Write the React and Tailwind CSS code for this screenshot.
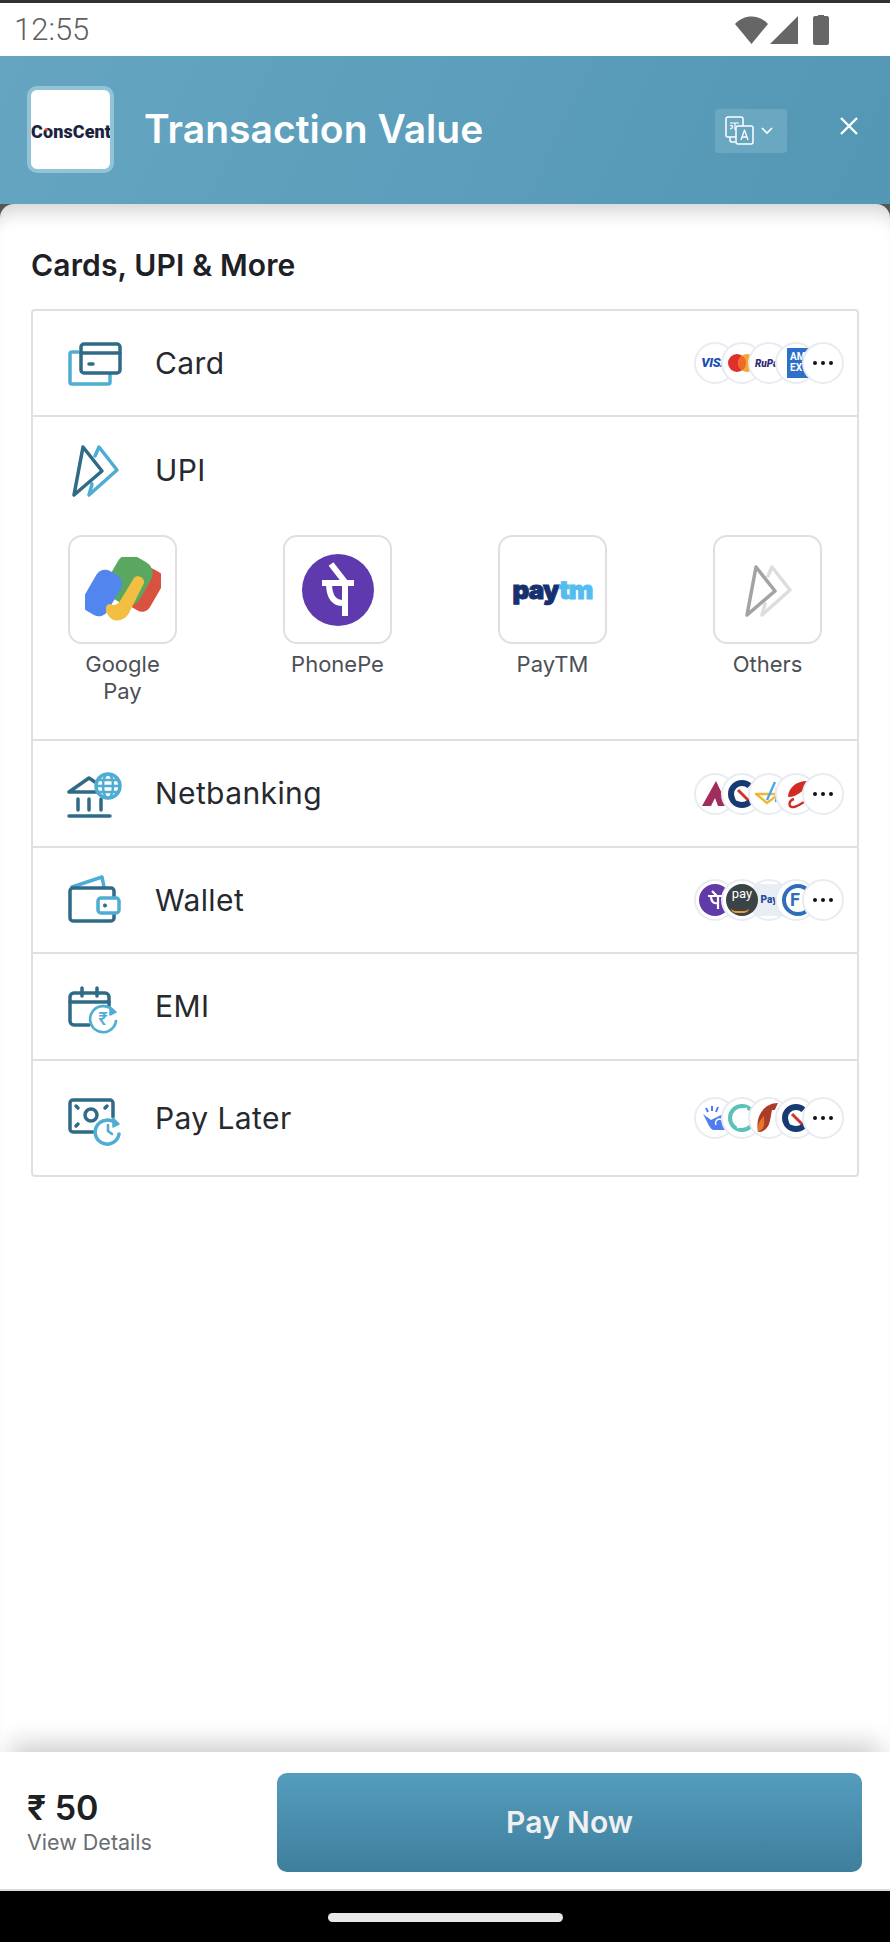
import React from 'react'

const DARK = '#2f6b87'
const LIGHT = '#4fadd4'

const StatusBar = () => (
  <div className="h-[56px] shrink-0 bg-white border-t-[3px] border-[#333333] flex items-center pl-[14px] pr-[59px]">
    <span className="flex-1 text-[31px] font-light text-[#5f5f5f] mt-[2px] font-['Roboto',sans-serif]">12:55</span>
    <svg width="97" height="32" viewBox="0 0 97 32" fill="#666666">
      <path d="M1 10 C10 0 25 0 34 10 L17.5 30 Z" />
      <path d="M64 2 V30 H36 Z" />
      <path d="M79 4 a2 2 0 0 1 2-2 h3 v-1 h6 v1 h3 a2 2 0 0 1 2 2 v25 a2 2 0 0 1-2 2 h-12 a2 2 0 0 1-2-2 Z" />
    </svg>
  </div>
)

const TranslateIcon = () => (
  <svg width="30" height="30" viewBox="0 0 30 30" fill="none" stroke="white" strokeWidth="1.5" strokeLinejoin="round">
    <rect x="1" y="1" width="17" height="20" rx="2" />
    <path d="M5 7 H14 M10 7 V14 M5 10 C8 8 9 12 5 13" strokeWidth="1.2" />
    <path d="M5 21 v3 a2 2 0 0 0 2 2 h3" />
    <rect x="11" y="10" width="17" height="18" rx="2" fill="#66a4bf" />
    <path d="M16 24 L19.5 14 L23 24 M17.2 21 H21.8" strokeWidth="1.3" />
  </svg>
)

const Header = () => (
  <div className="h-[148px] shrink-0 bg-linear-[115deg] from-[#65a5c1] to-[#5397b5] flex items-center pl-[27px] pr-[31px]">
    <div className="w-[87px] h-[87px] rounded-[10px] border-[4px] border-[#93c3d7] bg-white flex items-center overflow-hidden -mt-[1px]">
      <span className="relative mt-[3px] text-[18px] font-black tracking-[0.1px] whitespace-nowrap text-[#1c2340] font-['Roboto',sans-serif]">
        ConsCent
        <span className="absolute left-[14px] top-[10px] w-[3px] h-[3px] rounded-full bg-[#e5533d]"></span>
      </span>
    </div>
    <span className="ml-[30px] flex-1 text-[39px] tracking-[0.05px] font-semibold text-white font-['Inter',sans-serif] -mt-[2px]">Transaction Value</span>
    <div className="w-[72px] h-[44px] rounded-[4px] bg-[#6aa8c2] flex items-center pl-[10px] gap-[5px] mt-[1px]">
      <TranslateIcon />
      <svg width="14" height="10" viewBox="0 0 14 10" fill="none" stroke="white" strokeWidth="1.6"><path d="M2 2 L7 7 L12 2" /></svg>
    </div>
    <svg className="ml-[52px] -mt-[8px]" width="20" height="20" viewBox="0 0 20 20" stroke="white" strokeWidth="2.4"><path d="M2 2 L18 18 M18 2 L2 18" /></svg>
  </div>
)

const CardIcon = () => (
  <svg width="56" height="56" viewBox="0 0 56 56" fill="none" strokeWidth="3.5" strokeLinecap="round" strokeLinejoin="round">
    <path d="M11 17 H5 a2 2 0 0 0-2 2 V47 a2 2 0 0 0 2 2 H41 a2 2 0 0 0 2-2 V39" stroke={LIGHT} />
    <rect x="14" y="9" width="39" height="29" rx="3" stroke={DARK} />
    <path d="M14 18 H53" stroke={DARK} />
    <path d="M22 29 H26" stroke={DARK} />
  </svg>
)

const UpiIcon = ({ dark = DARK, light = LIGHT }) => (
  <svg width="56" height="56" viewBox="0 0 56 56" fill="none" strokeWidth="3.5" strokeLinecap="round" strokeLinejoin="round">
    <path d="M28 14 L32 5 L50 28 L22 53 L25 42" stroke={light} />
    <path d="M16 5 L35 29 L7 53 Z" stroke={dark} />
  </svg>
)

const BankIcon = () => (
  <svg width="56" height="56" viewBox="0 0 56 56" fill="none" strokeWidth="3.5" strokeLinecap="round" strokeLinejoin="round">
    <path d="M2 26 L22 12 L28 16 M2 26 H30" stroke={DARK} />
    <path d="M11 33 V44 M22 33 V44 M34 33 V44 M2 50 H43" stroke={DARK} />
    <circle cx="41" cy="20" r="12" fill="white" stroke={LIGHT} />
    <ellipse cx="41" cy="20" rx="5" ry="12" stroke={LIGHT} strokeWidth="2.5" />
    <path d="M29 20 H53 M31 14 H51 M31 26 H51" stroke={LIGHT} strokeWidth="2.5" />
  </svg>
)

const WalletIcon = () => (
  <svg width="56" height="56" viewBox="0 0 56 56" fill="none" strokeWidth="3.5" strokeLinecap="round" strokeLinejoin="round">
    <path d="M5 15 L35 5 L37 15" stroke={LIGHT} />
    <path d="M47 24 V19 a3 3 0 0 0-3-3 H6 a3 3 0 0 0-3 3 V46 a3 3 0 0 0 3 3 H44 a3 3 0 0 0 3-3 V42" stroke={DARK} />
    <rect x="31" y="26" width="21" height="15" rx="3" fill="white" stroke={LIGHT} />
    <circle cx="38" cy="33.5" r="1.6" fill={DARK} stroke={DARK} strokeWidth="1" />
  </svg>
)

const EmiIcon = () => (
  <svg width="56" height="56" viewBox="0 0 56 56" fill="none" strokeWidth="3.5" strokeLinecap="round" strokeLinejoin="round">
    <path d="M22 46 H7 a4 4 0 0 1-4-4 V18 a4 4 0 0 1 4-4 H38 a4 4 0 0 1 4 4 V27" stroke={DARK} />
    <path d="M3 23 H42 M15 9 V17 M30 9 V17" stroke={DARK} />
    <path d="M47 33 A13 13 0 1 0 49 42" fill="white" stroke={LIGHT} strokeWidth="2.6" />
    <path d="M43 28 L49 33 L43 36 Z" fill={LIGHT} stroke={LIGHT} strokeWidth="1.5" />
    <text x="36" y="46" textAnchor="middle" fontSize="17" fontWeight="600" fill={LIGHT} stroke="none" fontFamily="Inter, sans-serif">₹</text>
  </svg>
)

const PayLaterIcon = () => (
  <svg width="56" height="56" viewBox="0 0 56 56" fill="none" strokeWidth="3.5" strokeLinecap="round" strokeLinejoin="round">
    <path d="M26 42 H6 a3 3 0 0 1-3-3 V13 a3 3 0 0 1 3-3 H43 a3 3 0 0 1 3 3 V27" stroke={DARK} />
    <circle cx="24" cy="25" r="6" stroke={DARK} />
    <path d="M9 16 L11 18 M40 16 L38 18 M9 36 L11 34" stroke={DARK} />
    <path d="M49 34 A12 12 0 1 0 52 44" fill="white" stroke={LIGHT} />
    <path d="M46 28 L52 34 L46 37 Z" fill={LIGHT} stroke={LIGHT} strokeWidth="1.5" />
    <path d="M41 35 V41 L45 44" stroke={LIGHT} strokeWidth="2.6" />
  </svg>
)

const Visa = () => <span className="text-[13px] font-black italic tracking-[-0.3px] text-[#1a4fb5] font-['Roboto',sans-serif]">VISA</span>
const Master = () => (
  <svg width="30" height="20" viewBox="0 0 30 20">
    <circle cx="10" cy="10" r="9" fill="#e0302b" />
    <circle cx="20" cy="10" r="9" fill="#f3a536" />
    <path d="M15 2.5 a9 9 0 0 1 0 15 a9 9 0 0 1 0-15" fill="#f2682a" />
  </svg>
)
const RuPay = () => <span className="text-[10px] font-black italic text-[#2f2c7a] font-['Roboto',sans-serif]">RuPay</span>
const Amex = () => (
  <span className="w-[26px] h-[30px] ml-[8px] shrink-0 bg-[#2e6fc9] text-white text-[10px] font-bold leading-[11px] pl-[3px] pt-[3px] font-['Roboto',sans-serif]">AM<br />EX</span>
)
const Axis = () => (
  <svg width="28" height="28" viewBox="0 0 28 28"><path d="M1 26 L15 1 L27 26 H17 L14 18 L10 26 Z" fill="#a02d5c" /></svg>
)
const Navy = () => (
  <svg width="28" height="28" viewBox="0 0 28 28">
    <circle cx="14" cy="14" r="11" fill="none" stroke="#173a73" strokeWidth="6" />
    <path d="M8 20 L24 6" stroke="#fff" strokeWidth="3" />
    <path d="M10 10 L20 20" stroke="#d2352c" strokeWidth="3" />
  </svg>
)
const Arrow = () => (
  <svg width="28" height="28" viewBox="0 0 28 28" fill="none" strokeWidth="2.4">
    <path d="M1 14 L24 14 L12 23 Z" stroke="#f2b637" />
    <path d="M12 20 L20 2 M22 8 L21 22" stroke="#4ba7e6" />
  </svg>
)
const Swoosh = () => (
  <svg width="28" height="30" viewBox="0 0 28 30" fill="none">
    <path d="M6 18 C6 8 16 1 27 2 C24 10 16 18 6 18 Z" fill="#d32b24" />
    <path d="M12 20 C6 22 6 29 12 28 C16 27 19 25 22 23" stroke="#d32b24" strokeWidth="2.4" />
  </svg>
)
const PhoneSmall = () => (
  <span className="w-[32px] h-[32px] rounded-full shrink-0 bg-[#5f3aa8] text-white flex items-center justify-center">
    <svg width="18" height="20" viewBox="0 0 18 20" fill="none" stroke="white" strokeWidth="2.2"><path d="M2 6 H16 M12 6 V19 M6 1 L11 6 M5 6 C5 12 8 14 12 13" /></svg>
  </span>
)
const AmazonPay = () => (
  <span className="w-[32px] h-[32px] rounded-full shrink-0 bg-[#3a4346] text-white text-[13px] leading-[20px] text-center relative font-['Roboto',sans-serif]">
    pay
    <span className="absolute left-[5px] bottom-[3px] w-[18px] h-[5px] border-b-2 border-[#f29d25] rounded-b-full"></span>
  </span>
)
const PayBlue = () => (
  <span className="w-[32px] h-[32px] shrink-0 bg-[#e9eef4] text-[#1f4d9c] text-[10px] font-black leading-[32px] text-center font-['Roboto',sans-serif]">Pay</span>
)
const BlueF = () => (
  <span className="w-[32px] h-[32px] ml-[4px] rounded-full shrink-0 border-[4px] border-[#2e6fb8] text-[#2e6fb8] text-[18px] font-bold leading-[24px] pl-[4px] font-['Roboto',sans-serif]">F</span>
)
const Hand = () => (
  <svg width="28" height="30" viewBox="0 0 28 30" fill="none">
    <path d="M2 11 L10 17 L26 9 L26 27 H13 C9 27 7 20 2 11 Z" fill="#4f7df0" />
    <path d="M15 22 a4 4 0 1 1 7 0" stroke="#fff" strokeWidth="1.5" />
    <path d="M11 3 V8 M5 5 L7 9 M17 4 L15 9" stroke="#4f7df0" strokeWidth="2" />
  </svg>
)
const Teal = () => (
  <svg width="30" height="30" viewBox="0 0 30 30" fill="none">
    <circle cx="15" cy="15" r="12" stroke="#59c3b7" strokeWidth="4" />
    <path d="M20 6 C8 8 12 15 15 15 C19 15 22 22 10 24" stroke="#fff" strokeWidth="3" />
  </svg>
)
const Flame = () => (
  <svg width="30" height="32" viewBox="0 0 30 32">
    <path d="M24 1 C10 1 1 14 4 30 C12 30 15 24 17 16 L24 1 Z" fill="#ab3c2a" />
    <path d="M4 30 C3 22 6 18 10 14 C10 22 12 26 4 30 Z" fill="#e2762d" />
    <path d="M18 8 H24 L20 30 H14 Z" fill="#fff" />
  </svg>
)

const LogoStack = ({ logos }) => (
  <div className="flex items-center">
    {logos.map((Logo, index) => (
      <span key={index} className={`w-[42px] h-[42px] rounded-full bg-white border-2 border-[#e8ebf2] flex items-center justify-center overflow-hidden ${index === 0 ? '' : '-ml-[15px]'}`}>
        <Logo />
      </span>
    ))}
    <span className="w-[42px] h-[42px] -ml-[15px] rounded-full bg-white border-2 border-[#e8ebf2] flex items-center justify-center gap-[4px]">
      <span className="w-[4px] h-[4px] rounded-full bg-[#111111]"></span>
      <span className="w-[4px] h-[4px] rounded-full bg-[#111111]"></span>
      <span className="w-[4px] h-[4px] rounded-full bg-[#111111]"></span>
    </span>
  </div>
)

const GooglePayMark = () => (
  <svg width="76" height="66" viewBox="0 0 76 66">
    <rect x="49" y="11" width="24" height="44" rx="9" fill="#d9513f" transform="rotate(30 61 33)" />
    <rect x="25" y="-1" width="38" height="48" rx="13" fill="#5aa860" transform="rotate(30 44 23)" />
    <rect x="3" y="13" width="28" height="46" rx="10" fill="#5286ee" transform="rotate(30 17 36)" />
    <path d="M49 21 C52 17 60 20 59 26 L44 56 C40 64 28 67 23 58 C19 52 21 47 25 47 C29 49 32 48 35 44 Z" fill="#f2bf42" />
  </svg>
)

const PhonePeMark = () => (
  <svg width="72" height="72" viewBox="0 0 72 72">
    <circle cx="36" cy="36" r="36" fill="#5f3aae" />
    <g fill="none" stroke="white" strokeWidth="6">
      <path d="M20 29 H52" />
      <path d="M43 28 V62" />
      <path d="M29 10 L43 28" />
      <path d="M27 29 C27 44 33 50 43 49" />
    </g>
  </svg>
)

const PaytmMark = () => (
  <span className="text-[26px] font-black tracking-[-0.8px] leading-none font-['Inter',sans-serif] [-webkit-text-stroke:1px_currentColor]">
    <span className="text-[#17306f]">pay</span><span className="text-[#54bdf0]">tm</span>
  </span>
)

const apps = [
  { name: <>Google<br />Pay</>, mark: <GooglePayMark /> },
  { name: 'PhonePe', mark: <PhonePeMark /> },
  { name: 'PayTM', mark: <PaytmMark /> },
  { name: 'Others', mark: <UpiIcon dark="#a3a3a3" light="#dddddd" /> },
]

const RowHead = ({ icon, label, logos, className }) => (
  <div className={`flex items-center pl-[34px] pr-[13px] ${className}`}>
    <span className="w-[56px] h-[56px] shrink-0">{icon}</span>
    <span className="ml-[32px] flex-1 text-[30px] tracking-[0.4px] text-[#26292e]">{label}</span>
    {logos && <LogoStack logos={logos} />}
  </div>
)

const App = () => {
  return (
    <div className="w-[890px] h-[1942px] flex flex-col bg-[#555555] font-['Inter',sans-serif] overflow-hidden">
      <StatusBar />
      <Header />

      <div className="flex-1 bg-white rounded-t-[14px] px-[31px] pt-[41px] shadow-[inset_0_22px_18px_-14px_rgba(0,0,0,0.17)]">
        <h2 className="text-[30px] leading-[40px] tracking-[0.15px] font-semibold text-[#1d2024]">Cards, UPI &amp; More</h2>
        <div className="mt-[24px] border-2 border-[#e0e0e0] rounded-[4px]">
          <RowHead className="h-[106px] border-b-2 border-[#e0e0e0]" icon={<CardIcon />} label="Card" logos={[Visa, Master, RuPay, Amex]} />

          <div className="h-[324px] border-b-2 border-[#e0e0e0]">
            <RowHead className="h-[106px]" icon={<UpiIcon />} label="UPI" />
            <div className="mt-[12px] pl-[35px] pr-[35px] flex justify-between">
              {apps.map((app, index) => (
                <div key={index} className="w-[109px] flex flex-col items-center">
                  <div className="w-[109px] h-[109px] rounded-[14px] border-2 border-[#e0e0e0] flex items-center justify-center">
                    {app.mark}
                  </div>
                  <p className="mt-[7px] text-[22px] leading-[27px] text-center text-[#4c5056]">{app.name}</p>
                </div>
              ))}
            </div>
          </div>

          <RowHead className="h-[107px] border-b-2 border-[#e0e0e0]" icon={<BankIcon />} label="Netbanking" logos={[Axis, Navy, Arrow, Swoosh]} />
          <RowHead className="h-[106px] border-b-2 border-[#e0e0e0]" icon={<WalletIcon />} label="Wallet" logos={[PhoneSmall, AmazonPay, PayBlue, BlueF]} />
          <RowHead className="h-[107px] border-b-2 border-[#e0e0e0]" icon={<EmiIcon />} label="EMI" />
          <RowHead className="h-[114px]" icon={<PayLaterIcon />} label="Pay Later" logos={[Hand, Teal, Flame, Navy]} />
        </div>
      </div>

      <div className="h-[139px] shrink-0 bg-white border-b-2 border-[#dddddd] flex items-center pl-[27px] pr-[28px] shadow-[0_-18px_24px_-10px_rgba(0,0,0,0.2)]">
        <div className="w-[250px] mt-[2px]">
          <p className="text-[34px] leading-[40px] font-semibold text-[#1d2024]">₹ 50</p>
          <p className="text-[21.5px] leading-[28px] text-[#6a6d71]">View Details</p>
        </div>
        <button className="flex-1 h-[99px] mt-[4px] rounded-[10px] bg-linear-to-b from-[#559dbd] to-[#3f7e9d] text-[30px] font-semibold text-[#f0f0f0]">Pay Now</button>
      </div>

      <div className="h-[51px] shrink-0 bg-black flex justify-center pt-[22px]">
        <div className="w-[235px] h-[9px] rounded-full bg-[#e8e8e8]"></div>
      </div>
    </div>
  )
}

export default App
